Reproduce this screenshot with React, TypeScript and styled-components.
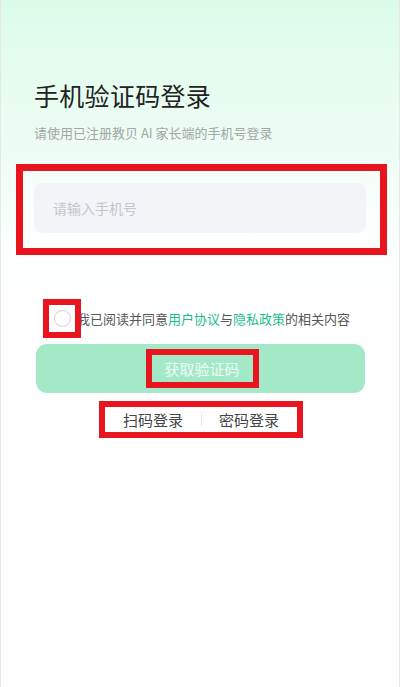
import React from "react";
import styled, { createGlobalStyle } from "styled-components";

const Global = createGlobalStyle`
  html, body { margin: 0; padding: 0; background: #ffffff; }
  * { box-sizing: border-box; }
  body { font-family: "Noto Sans CJK SC", "Noto Sans", sans-serif; }
`;

const Page = styled.div`
  width: 400px;
  min-height: 687px;
  border-left: 1px solid #e6e8e7;
  border-right: 1px solid #e6e8e7;
  background: linear-gradient(180deg, #dbfbe9 0px, #eefdf4 150px, #fbfffd 250px, #ffffff 300px);
  padding: 78px 33px 0 33px;
  display: flex;
  flex-direction: column;
`;

const Title = styled.h1`
  margin: 0;
  font-size: 25px;
  line-height: 35px;
  font-weight: 400;
  color: #222222;
  letter-spacing: 0.3px;
`;

const Subtitle = styled.p`
  margin: 10px 0 0 0;
  font-size: 13px;
  line-height: 20px;
  color: #a3a6a8;
`;

const Mark = styled.div`
  border: 7px solid #e8141e;
`;

const InputFrame = styled(Mark)`
  margin: 21px -21px 0 -18px;
  padding: 12px 14px 15px 11px;
  background: rgba(255, 255, 255, 0.35);
`;

const PhoneInput = styled.input`
  display: block;
  width: 100%;
  height: 50px;
  border: none;
  outline: none;
  border-radius: 9px;
  background: #f3f4f8;
  padding: 0 19px;
  font-family: inherit;
  font-size: 14px;
  color: #333;
  &::placeholder { color: #c3c5cb; }
`;

const AgreeRow = styled.div`
  margin-top: 44px;
  display: flex;
  align-items: center;
`;

const CheckMark = styled(Mark)`
  border-width: 6px;
  width: 38px;
  height: 39px;
  margin-left: 9px;
  display: flex;
  align-items: center;
  justify-content: center;
  position: relative;
  z-index: 1;
`;

const Circle = styled.span`
  width: 17px;
  height: 17px;
  border-radius: 50%;
  border: 1px solid #cdd0d6;
  background: #fff;
`;

const AgreeText = styled.span`
  margin-left: -4px;
  font-size: 13px;
  color: #555759;
  white-space: nowrap;
`;

const Link = styled.span`
  color: #1dbd8a;
`;

const SubmitButton = styled.button`
  margin: 6px 1px 0 2px;
  height: 49px;
  border: none;
  border-radius: 11px;
  background: #a3e9c8;
  display: flex;
  align-items: center;
  justify-content: center;
  padding: 0;
  font-family: inherit;
`;

const ButtonLabel = styled(Mark)`
  border-width: 6px;
  width: 113px;
  height: 39px;
  margin-left: 3px;
  display: flex;
  align-items: center;
  justify-content: center;
  font-size: 15px;
  color: #eefcf5;
`;

const LinksMark = styled(Mark)`
  border-width: 6px;
  align-self: center;
  margin: 8px 0 0 0;
  width: 204px;
  height: 37px;
  display: flex;
  align-items: center;
  padding: 0 0 0 18px;
  transform: translateX(1px);
`;

const LinkItem = styled.span`
  font-size: 15px;
  color: #444;
  line-height: 20px;
`;

const Divider = styled.span`
  width: 1px;
  height: 13px;
  background: #e3e4e6;
  margin: 0 17px 0 18px;
`;

export default function App() {
  return (
    <>
      <Global />
      <Page>
        <Title>手机验证码登录</Title>
        <Subtitle>请使用已注册教贝 AI 家长端的手机号登录</Subtitle>
        <InputFrame>
          <PhoneInput placeholder="请输入手机号" />
        </InputFrame>
        <AgreeRow>
          <CheckMark>
            <Circle />
          </CheckMark>
          <AgreeText>
            我已阅读并同意<Link>用户协议</Link>与<Link>隐私政策</Link>的相关内容
          </AgreeText>
        </AgreeRow>
        <SubmitButton>
          <ButtonLabel>获取验证码</ButtonLabel>
        </SubmitButton>
        <LinksMark>
          <LinkItem>扫码登录</LinkItem>
          <Divider />
          <LinkItem>密码登录</LinkItem>
        </LinksMark>
      </Page>
    </>
  );
}
